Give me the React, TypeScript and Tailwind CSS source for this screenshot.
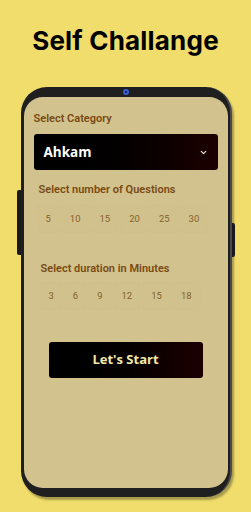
import { ChevronDown } from "lucide-react";

const questionCounts = [5, 10, 15, 20, 25, 30];
const minuteOptions = [3, 6, 9, 12, 15, 18];

function Chip({ value }: { value: number }) {
  return (
    <div className="h-[26px] px-[8px] flex items-center justify-center rounded-[2px] bg-[#d0c18d] shadow-[0_0_1px_rgba(90,70,20,0.1)] text-[9.5px] text-[#85622a] font-['Roboto',sans-serif]">
      {value}
    </div>
  );
}

function SectionLabel({ children, className = "" }: { children: string; className?: string }) {
  return (
    <p
      className={`text-[11px] leading-[14px] font-semibold text-[#7a4a14] font-['Roboto',sans-serif] ${className}`}
    >
      {children}
    </p>
  );
}

export default function App() {
  return (
    <div className="w-[251px] h-[512px] overflow-hidden bg-[#f0dd6b] flex flex-col items-center">
      <h1 className="mt-[25px] text-[26px] leading-[32px] font-bold tracking-[0.2px] text-black font-['Inter',sans-serif]">
        Self Challange
      </h1>

      {/* phone frame */}
      <div className="relative mt-[30px] ml-[1px] w-[211px] h-[410px] rounded-[26px] bg-[#1f1f1f] border-r-[2px] border-[#4a4a4c] pl-[3px] pr-[2px] pt-[10px] pb-[9px] shadow-[2px_3px_2px_rgba(0,0,0,0.3)]">
        {/* side buttons */}
        <div className="absolute left-[-4px] top-[103px] w-[4px] h-[65px] rounded-l-[2px] bg-[#1a1a1a]" />
        <div className="absolute right-[-5px] top-[136px] w-[3px] h-[34px] rounded-r-[2px] bg-[#1a1a1a]" />
        {/* camera */}
        <div className="absolute left-[102px] top-[2px] w-[6px] h-[6px] rounded-full bg-[#3d5fd6] flex items-center justify-center">
          <div className="w-[2px] h-[2px] rounded-full bg-[#10163a]" />
        </div>

        {/* screen */}
        <div className="h-full rounded-[19px] bg-[#d1c28e] flex flex-col pt-[15px] px-[10px]">
          <SectionLabel>Select Category</SectionLabel>

          <div className="mt-[8px] w-[184px] h-[36px] rounded-[3px] bg-gradient-to-r from-[#000000] to-[#1c0000] flex items-center justify-between pl-[10px] pr-[10px]">
            <span className="text-[13.5px] font-bold text-white font-['Open_Sans',sans-serif]">Ahkam</span>
            <ChevronDown size={9} strokeWidth={3} className="text-[#f3ecd0]" />
          </div>

          <SectionLabel className="mt-[13px] ml-[5px]">Select number of Questions</SectionLabel>
          <div className="mt-[9px] ml-[4px] flex gap-[3px]">
            {questionCounts.map((n) => (
              <Chip key={n} value={n} />
            ))}
          </div>

          <SectionLabel className="mt-[30px] ml-[7px]">Select duration in Minutes</SectionLabel>
          <div className="mt-[7px] ml-[7px] flex gap-[3px]">
            {minuteOptions.map((n) => (
              <Chip key={n} value={n} />
            ))}
          </div>

          <button
            type="button"
            className="mt-[33px] ml-[15px] w-[154px] h-[36px] rounded-[3px] bg-gradient-to-r from-[#000000] to-[#1c0000] text-[13px] font-bold text-[#f4e9a6] font-['Open_Sans',sans-serif]"
          >
            Let's Start
          </button>
        </div>
      </div>
    </div>
  );
}
